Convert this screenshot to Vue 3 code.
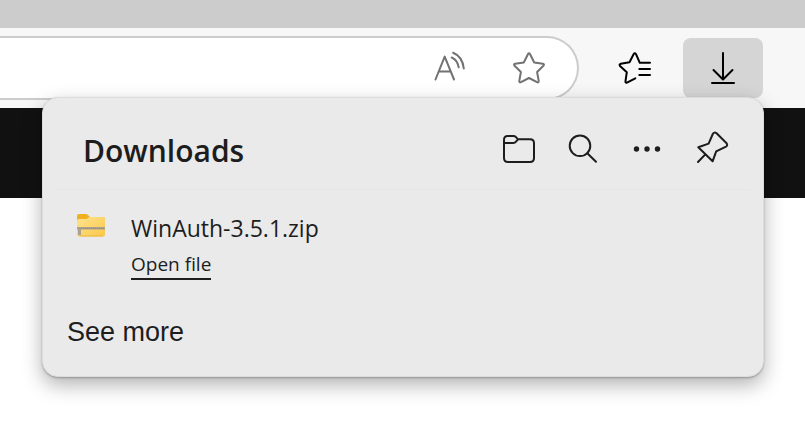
<script setup>
const fileName = 'WinAuth-3.5.1.zip'
</script>

<template>
  <div class="browser">
    <div class="tabstrip"></div>
    <div class="toolbar">
      <div class="address">
        <button class="icon-btn" type="button" aria-label="Read aloud">
          <svg width="40" height="40" viewBox="0 0 40 40" class="muted">
            <path d="M6.5 31.5 L15.7 8.6 L25 31.5 M9.7 23.5 H21.8" />
            <path d="M22.7 9.5 C26.3 11 29 14.5 29.7 19.3 M24.1 4.7 C30 7 33.9 12.5 34.8 20.5" />
          </svg>
        </button>
        <button class="icon-btn" type="button" aria-label="Add to favorites">
          <svg width="40" height="40" viewBox="0 0 40 40" class="muted">
            <path d="M18.9 6.3 Q20 4.4 21.1 6.3 L25.2 14.5 L33.8 15.8 Q35.8 16.3 34.4 17.8 L28.1 24 L29.7 32.9 Q29.9 35 28 34.2 L20 30 L12 34.2 Q10.1 35 10.3 32.9 L11.9 24 L5.6 17.8 Q4.2 16.3 6.2 15.8 L14.8 14.5 Z" />
          </svg>
        </button>
      </div>
      <button class="tool" type="button" aria-label="Favorites">
        <svg width="40" height="40" viewBox="0 0 40 40">
          <path d="M20.3 30.3 L12 34.6 Q10.2 35.3 10.5 33.2 L11.8 24.2 L5 18 Q3.8 16.5 5.8 15.8 L14.5 14.3 L18.6 6.2 Q19.8 4.3 21 6.2 L24.8 14.8 H35 M24.3 21 H35 M24.3 27 H35" />
        </svg>
      </button>
      <button class="tool active" type="button" aria-label="Downloads">
        <svg width="40" height="40" viewBox="0 0 40 40">
          <path d="M20 5 V31 M10.5 22 L20 31.5 L29.5 22 M9 35 H31" />
        </svg>
      </button>
    </div>
    <div class="banner"></div>

    <section class="panel" aria-labelledby="panel-title">
      <header class="panel-head">
        <h1 id="panel-title">Downloads</h1>
        <button class="action" type="button" aria-label="Open downloads folder">
          <svg width="40" height="40" viewBox="0 0 40 40">
            <path d="M5 14 V10.8 Q5 7 8.8 7 H14.3 Q16 7 17 8.1 L19 10.3 H31 Q35 10.3 35 14.3 V29 Q35 33 31 33 H9 Q5 33 5 29 V14 H14.3 Q16 14 17 12.7 L19 10.3" />
          </svg>
        </button>
        <button class="action" type="button" aria-label="Search downloads">
          <svg width="40" height="40" viewBox="0 0 40 40">
            <circle cx="17" cy="16.8" r="10.3" />
            <path d="M24.3 24.2 L33 32.7" />
          </svg>
        </button>
        <button class="action" type="button" aria-label="More options">
          <svg width="40" height="40" viewBox="0 0 40 40">
            <g class="dots">
              <circle cx="9.5" cy="20" r="2.7" />
              <circle cx="20" cy="20" r="2.7" />
              <circle cx="30.5" cy="20" r="2.7" />
            </g>
          </svg>
        </button>
        <button class="action" type="button" aria-label="Pin downloads">
          <svg width="40" height="40" viewBox="0 0 40 40">
            <path d="M21.8 5 Q23.2 2.6 25.6 4.3 L35.6 14.3 Q37 16.4 35 17.6 L25.2 22.3 L21.6 32.3 L7.3 18.2 L17.6 14.6 Z M14.3 25.4 L7 33" />
          </svg>
        </button>
      </header>
      <div class="item">
        <svg class="zip" width="30" height="24" viewBox="0 0 30 24" aria-hidden="true">
          <defs>
            <linearGradient id="folder-front" x1="0" y1="0" x2="1" y2="1">
              <stop offset="0" stop-color="#ffe391" />
              <stop offset="1" stop-color="#fac847" />
            </linearGradient>
          </defs>
          <path d="M1 2 Q1 0 3 0 H10 Q11 0 12 1 L14 3 H27 Q29 3 29 5 V11 H1 Z" fill="#efb01e" />
          <path d="M1 7 Q1 5 3 5 H10 Q11 5 12 4 L13 3 H27 Q29 3 29 5 V20.5 Q29 22.5 27 22.5 H3 Q1 22.5 1 20.5 Z" fill="url(#folder-front)" />
          <path d="M1 13 H29 V15.5 H5 V21 H2 V15.5 H1 Z" fill="#aaa18e" />
          <path class="teeth" d="M5 14.5 H29" stroke="#8d8a80" stroke-dasharray="1 1" />
          <path class="teeth" d="M3 22 H27" stroke="#e9b945" />
        </svg>
        <div class="details">
          <span class="name">{{ fileName }}</span>
          <a class="open" href="#open">Open file</a>
        </div>
      </div>
      <a class="more" href="#more">See more</a>
    </section>
  </div>
</template>

<style>
body {
  background: #fff;
}
</style>

<style scoped>
.browser {
  position: relative;
  min-height: 100vh;
  font-family: "Open Sans", "Noto Sans", sans-serif;
  color: #1d1d1d;
}
button {
  display: flex;
  align-items: center;
  justify-content: center;
  padding: 0;
  border: 0;
  background: none;
  color: inherit;
}
svg {
  flex: none;
  fill: none;
  stroke: currentColor;
  stroke-width: 2;
  stroke-linecap: round;
  stroke-linejoin: round;
}
.tabstrip {
  height: 28px;
  background: #ccc;
}
.toolbar {
  box-sizing: border-box;
  height: 80px;
  padding: 8px 42px 0 0;
  display: flex;
  align-items: flex-start;
  background: #f7f7f7;
  color: #000;
}
.address {
  box-sizing: border-box;
  flex: 1;
  height: 64px;
  margin-right: 16px;
  padding-right: 8px;
  display: flex;
  justify-content: flex-end;
  align-items: center;
  border: 2px solid #ccc;
  border-left: 0;
  border-radius: 0 32px 32px 0;
  background: #fff;
}
.icon-btn {
  width: 80px;
  height: 60px;
}
.muted {
  color: #727272;
}
.tool {
  width: 80px;
  height: 60px;
  margin-top: 2px;
  margin-left: 8px;
  border-radius: 8px;
}
.tool:first-of-type {
  margin-left: 0;
}
.active {
  background: #d5d5d5;
}
.banner {
  height: 90px;
  background: #111;
}
.panel {
  position: absolute;
  top: 97px;
  left: 42px;
  right: 41px;
  box-sizing: border-box;
  padding: 16px 12px 28px;
  border: 1px solid #dcdcdc;
  border-radius: 16px;
  background: #eaeaea;
  box-shadow: 0 1px 2px rgba(0, 0, 0, 0.25), 0 8px 20px rgba(0, 0, 0, 0.3);
}
.panel-head {
  display: flex;
  align-items: center;
  height: 70px;
  padding: 0 8px 5px 28px;
  border-bottom: 1px solid #e5e5e5;
}
h1 {
  flex: 1;
  margin: 0;
  padding-top: 4px;
  font-size: 30px;
  line-height: 40px;
  font-weight: 600;
}
.action {
  width: 64px;
  height: 64px;
}
.dots {
  fill: currentColor;
  stroke: none;
}
.item {
  display: flex;
  gap: 25px;
  padding: 24px 20px 0 21px;
}
.zip {
  stroke: none;
}
.teeth {
  stroke-width: 1;
  stroke-linecap: butt;
}
.details {
  display: flex;
  flex-direction: column;
  align-items: flex-start;
}
.name {
  font-size: 23px;
  line-height: 28px;
}
.open {
  margin-top: 10px;
  padding-bottom: 2px;
  border-bottom: 2px solid #1d1d1d;
  font-size: 19px;
  line-height: 24px;
  color: inherit;
  text-decoration: none;
}
.more {
  display: block;
  width: fit-content;
  margin: 36px 0 0 12px;
  font-family: "Liberation Sans", sans-serif;
  font-size: 27px;
  line-height: 32px;
  color: inherit;
  text-decoration: none;
}
</style>
